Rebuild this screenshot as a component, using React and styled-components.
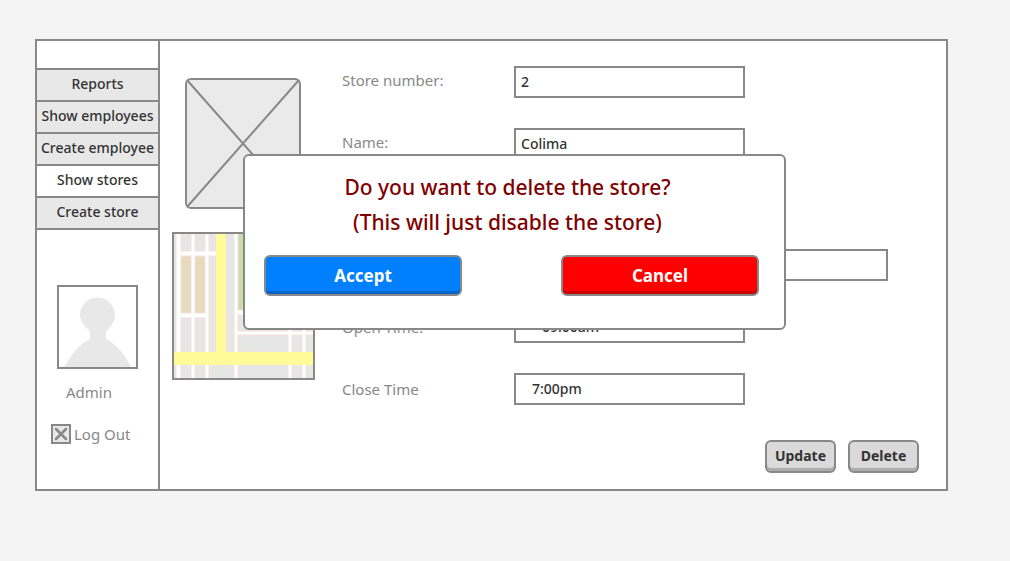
import React from "react";
import styled, { createGlobalStyle } from "styled-components";

const line = "#888888";
const ink = "#333333";

const GlobalStyle = createGlobalStyle`
  * { box-sizing: border-box; }
  body {
    margin: 0;
    background: #f4f4f4;
    font-family: "Noto Sans", "Open Sans", sans-serif;
    color: ${line};
  }
  button, input { font-family: inherit; }
`;

const Page = styled.div`
  padding: 39px 62px 40px 35px;
`;

const Panel = styled.div`
  position: relative;
  display: flex;
  min-height: 452px;
  background: #ffffff;
  border: 2px solid ${line};
`;

const Sidebar = styled.aside`
  flex: 0 0 123px;
  padding-top: 27px;
  border-right: 2px solid ${line};
`;

const Menu = styled.nav`
  display: flex;
  flex-direction: column;
  border-bottom: 2px solid ${line};
`;

const MenuItem = styled.a`
  height: 32px;
  border-top: 2px solid ${line};
  background: ${(p) => (p.$active ? "#ffffff" : "#e8e8e8")};
  color: ${ink};
  font-size: 14px;
  font-weight: 500;
  line-height: 28px;
  text-align: center;
  text-decoration: none;
  white-space: nowrap;
`;

const Avatar = styled.svg`
  display: block;
  width: 81px;
  height: 84px;
  margin: 55px auto 11px;
  border: 2px solid ${line};
`;

const UserName = styled.div`
  padding-left: 29px;
  font-size: 15px;
  line-height: 24px;
`;

const LogOut = styled.button`
  display: flex;
  align-items: center;
  gap: 3px;
  margin: 18px 0 0 14px;
  padding: 0;
  border: 0;
  background: none;
  color: ${line};
  font-size: 15px;
  line-height: 24px;
  white-space: nowrap;
`;

const Content = styled.main`
  flex: 1;
  display: flex;
  flex-direction: column;
  justify-content: space-between;
  padding: 25px 27px 16px 12px;
`;

const Details = styled.div`
  display: flex;
  gap: 27px;
`;

const Media = styled.div`
  flex: 0 0 143px;
  padding-top: 12px;
`;

const Photo = styled.svg`
  display: block;
  width: 116px;
  height: 131px;
  margin: 0 0 23px 13px;
`;

const StoreMap = styled.svg`
  display: block;
  width: 143px;
  height: 148px;
  border: 2px solid ${line};
`;

const Form = styled.form`
  flex: 1;
  display: flex;
  flex-direction: column;
  gap: 89px;
`;

const FieldGroup = styled.div`
  display: flex;
  flex-direction: column;
  gap: 30px;
`;

const Field = styled.div`
  display: grid;
  grid-template-columns: 172px 1fr;
  align-items: center;
`;

const Label = styled.label`
  padding-bottom: ${(p) => (p.$raised ? 4 : 0)}px;
  font-size: 15px;
  line-height: 24px;
`;

const TextBox = styled.input`
  width: 100%;
  max-width: ${(p) => (p.$wide ? 374 : 231)}px;
  height: 32px;
  padding: 0 5px 2px ${(p) => p.$indent || 5}px;
  border: 2px solid ${line};
  border-radius: 0;
  background: #ffffff;
  color: ${ink};
  font-size: 14px;
  font-weight: 500;
  outline: 0;
`;

const Actions = styled.div`
  display: flex;
  justify-content: flex-end;
  gap: 12px;
`;

const SmallButton = styled.button`
  width: 71px;
  height: 33px;
  padding: 0 0 2px;
  border: 2px solid ${line};
  border-radius: 6px;
  background: #dadada;
  box-shadow: inset 0 -3px #acacac;
  color: ${ink};
  font-size: 14px;
  font-weight: 700;
`;

const Dialog = styled.div`
  position: absolute;
  top: 113px;
  left: 206px;
  width: 543px;
  padding: 14px 25px 32px 19px;
  border: 2px solid ${line};
  border-radius: 6px;
  background: #ffffff;
`;

const Message = styled.p`
  margin: 0 0 15px;
  padding-right: 8px;
  color: #800000;
  font-size: 21px;
  font-weight: 500;
  line-height: 35px;
  text-align: center;
`;

const Choices = styled.div`
  display: flex;
  justify-content: space-between;
`;

const ChoiceButton = styled.button`
  width: 198px;
  height: 41px;
  padding: 0;
  border: 2px solid ${line};
  border-radius: 6px;
  background: ${(p) => (p.$danger ? "#ff0000" : "#0080ff")};
  box-shadow: inset 0 -3px ${(p) => (p.$danger ? "#cc0000" : "#0066cc")};
  color: #ffffff;
  font-size: 17px;
  font-weight: 700;
`;

const menu = ["Reports", "Show employees", "Create employee", "Show stores", "Create store"];

const blocks = [
  [-1, -1, 3, 119], [-1, 131, 3, 14],
  [7, -1, 10, 18], [7, 84, 10, 34], [7, 131, 10, 14],
  [21, -1, 10, 18], [21, 84, 10, 34], [21, 131, 10, 14],
  [35, -1, 8, 18], [35, 22, 8, 96], [52, -1, 8, 119], [35, 131, 25, 14],
  [64, 81, 50, 16], [64, 101, 50, 17], [64, 131, 50, 14],
  [118, 81, 10, 16], [118, 101, 10, 17], [118, 131, 10, 14],
  [132, 81, 9, 16], [132, 101, 9, 17], [132, 131, 9, 14],
];

export default function App() {
  return (
    <Page>
      <GlobalStyle />
      <Panel>
        <Sidebar>
          <Menu>
            {menu.map((item) => (
              <MenuItem key={item} href="#" $active={item === "Show stores"}>{item}</MenuItem>
            ))}
          </Menu>
          <Avatar viewBox="0 0 77 80" aria-hidden="true">
            <path
              fill="#e8e8e8"
              d="M5 80C14 65 22 56 31 52V46Q31 44 28 41C24 38 21 33 21 28A17.500 17.500 0 0 1 56 28C56 33 53 38 50 41Q47 44 47 46V52C57 57 66 67 72 80Z"
            />
          </Avatar>
          <UserName>Admin</UserName>
          <LogOut type="button">
            <svg width="20" height="20" viewBox="0 0 20 20" aria-hidden="true">
              <rect x="1" y="1" width="18" height="18" fill="#e8e8e8" stroke={line} strokeWidth="2" />
              <path d="M5 5L15 15M15 5L5 15" stroke={line} strokeWidth="2.500" strokeLinecap="round" />
            </svg>
            Log Out
          </LogOut>
        </Sidebar>
        <Content>
          <Details>
            <Media>
              <Photo viewBox="0 0 116 131" aria-hidden="true">
                <rect x="1" y="1" width="114" height="129" rx="5" fill="#eaeaea" stroke={line} strokeWidth="2" />
                <path d="M2 2L114 129M114 2L2 129" stroke={line} strokeWidth="2" />
              </Photo>
              <StoreMap viewBox="0 0 139 144" aria-hidden="true">
                <rect width="139" height="144" fill="#ffffff" />
                <g fill="#e6e6e6" stroke="#f3e2dc">
                  {blocks.map(([x, y, w, h]) => (
                    <rect key={`${x},${y}`} x={x} y={y} width={w} height={h} />
                  ))}
                </g>
                <g stroke="#f3e2dc">
                  <rect x="7" y="22" width="10" height="57" fill="#e6dcbd" />
                  <rect x="21" y="22" width="10" height="57" fill="#e6dcbd" />
                  <rect x="64" y="-1" width="77" height="77" fill="#cbdcaa" />
                </g>
                <path fill="#fffb99" d="M42 0H52V118H139V131H0V118H42Z" />
              </StoreMap>
            </Media>
            <Form>
              <FieldGroup>
                <Field>
                  <Label $raised htmlFor="number">Store number:</Label>
                  <TextBox id="number" defaultValue="2" />
                </Field>
                <Field>
                  <Label $raised htmlFor="name">Name:</Label>
                  <TextBox id="name" defaultValue="Colima" />
                </Field>
              </FieldGroup>
              <FieldGroup>
                <Field>
                  <span />
                  <TextBox $wide aria-label="Address" />
                </Field>
                <Field>
                  <Label htmlFor="open">Open Time:</Label>
                  <TextBox id="open" $indent={26} defaultValue="09:00am" />
                </Field>
                <Field>
                  <Label htmlFor="close">Close Time</Label>
                  <TextBox id="close" $indent={16} defaultValue="7:00pm" />
                </Field>
              </FieldGroup>
            </Form>
          </Details>
          <Actions>
            <SmallButton type="button">Update</SmallButton>
            <SmallButton type="button">Delete</SmallButton>
          </Actions>
        </Content>
        <Dialog role="dialog" aria-labelledby="message">
          <Message id="message">
            Do you want to delete the store?
            <br />
            (This will just disable the store)
          </Message>
          <Choices>
            <ChoiceButton type="button">Accept</ChoiceButton>
            <ChoiceButton type="button" $danger>Cancel</ChoiceButton>
          </Choices>
        </Dialog>
      </Panel>
    </Page>
  );
}
